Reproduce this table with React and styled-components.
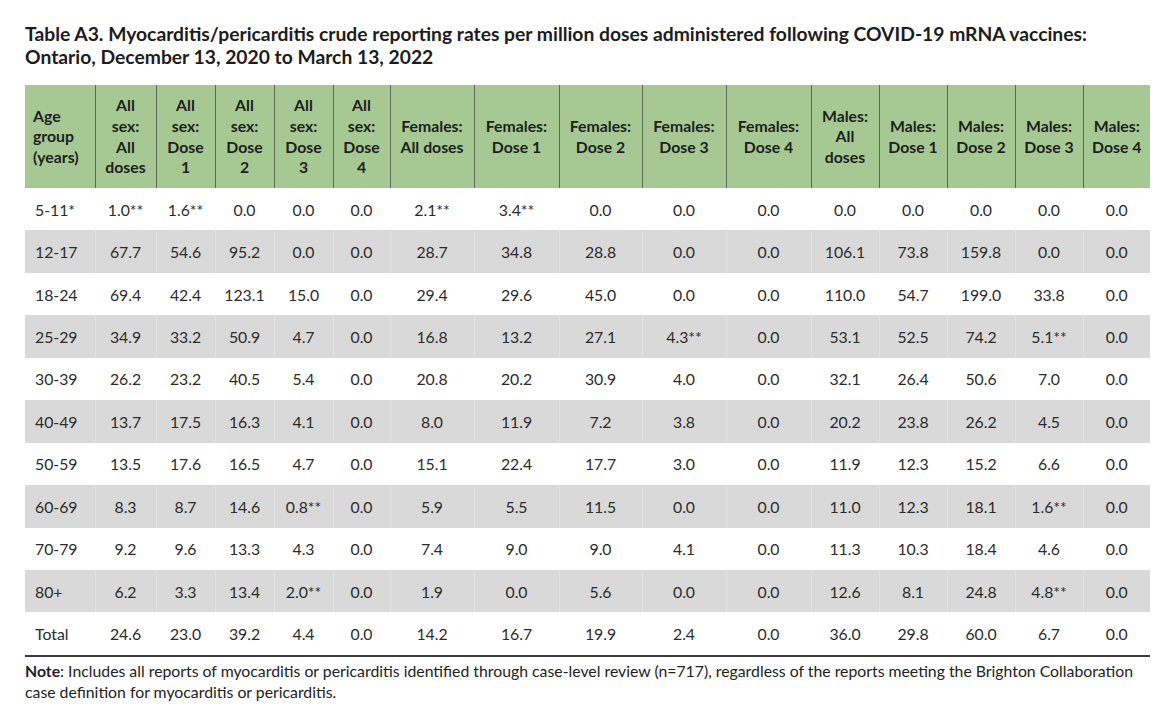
import React from "react";
import styled, { createGlobalStyle } from "styled-components";

const GlobalStyle = createGlobalStyle`
  body {
    margin: 0;
    background: #ffffff;
    font-family: Lato, "Liberation Sans", sans-serif;
    color: #222;
  }
`;

const Page = styled.div`
  width: 1169px;
  height: 705px;
  padding: 23px 0 0 25px;
  box-sizing: border-box;
  overflow: hidden;
`;

const Title = styled.h1`
  margin: 0 0 17px 0;
  font-size: 19.3px;
  font-weight: 700;
  line-height: 22.5px;
  color: #1c1c1c;
  white-space: nowrap;
`;

const Table = styled.table`
  border-collapse: collapse;
  table-layout: fixed;
  width: 1125px;
  border-bottom: 2px solid #3a3a3a;
`;

const HeadCell = styled.th`
  background: #a6c994;
  height: 103px;
  padding: 0 2px;
  font-size: 15.8px;
  font-weight: 700;
  line-height: 20.6px;
  color: #1e1e1e;
  text-align: ${(p) => (p.$left ? "left" : "center")};
  padding-left: ${(p) => (p.$left ? "8px" : "2px")};
  border-left: 1px solid #5c6b55;
  vertical-align: middle;
  &:first-child {
    border-left: none;
  }
`;

const Row = styled.tr`
  background: ${(p) => (p.$shaded ? "#d9d9d9" : "#ffffff")};
`;

const Cell = styled.td`
  height: 42.45px;
  padding: 0;
  font-size: 15.8px;
  color: #2b2b2b;
  text-align: ${(p) => (p.$left ? "left" : "center")};
  padding-left: ${(p) => (p.$left ? "10px" : "0")};
  border-left: 1px solid ${(p) => (p.$shaded ? "#e3e3e3" : "#ffffff")};
  &:first-child {
    border-left: none;
  }
`;

const Note = styled.p`
  margin: 3px 0 0 0;
  width: 1140px;
  font-size: 15.8px;
  line-height: 21px;
  color: #222;
  white-space: nowrap;
`;

const widths = [70, 61, 59, 59, 59, 57, 84, 85, 83, 84, 85, 68, 68, 68, 68, 67];

const headers = [
  ["Age", "group", "(years)"],
  ["All", "sex:", "All", "doses"],
  ["All", "sex:", "Dose", "1"],
  ["All", "sex:", "Dose", "2"],
  ["All", "sex:", "Dose", "3"],
  ["All", "sex:", "Dose", "4"],
  ["Females:", "All doses"],
  ["Females:", "Dose 1"],
  ["Females:", "Dose 2"],
  ["Females:", "Dose 3"],
  ["Females:", "Dose 4"],
  ["Males:", "All", "doses"],
  ["Males:", "Dose 1"],
  ["Males:", "Dose 2"],
  ["Males:", "Dose 3"],
  ["Males:", "Dose 4"],
];

const rows = [
  ["5-11*", "1.0**", "1.6**", "0.0", "0.0", "0.0", "2.1**", "3.4**", "0.0", "0.0", "0.0", "0.0", "0.0", "0.0", "0.0", "0.0"],
  ["12-17", "67.7", "54.6", "95.2", "0.0", "0.0", "28.7", "34.8", "28.8", "0.0", "0.0", "106.1", "73.8", "159.8", "0.0", "0.0"],
  ["18-24", "69.4", "42.4", "123.1", "15.0", "0.0", "29.4", "29.6", "45.0", "0.0", "0.0", "110.0", "54.7", "199.0", "33.8", "0.0"],
  ["25-29", "34.9", "33.2", "50.9", "4.7", "0.0", "16.8", "13.2", "27.1", "4.3**", "0.0", "53.1", "52.5", "74.2", "5.1**", "0.0"],
  ["30-39", "26.2", "23.2", "40.5", "5.4", "0.0", "20.8", "20.2", "30.9", "4.0", "0.0", "32.1", "26.4", "50.6", "7.0", "0.0"],
  ["40-49", "13.7", "17.5", "16.3", "4.1", "0.0", "8.0", "11.9", "7.2", "3.8", "0.0", "20.2", "23.8", "26.2", "4.5", "0.0"],
  ["50-59", "13.5", "17.6", "16.5", "4.7", "0.0", "15.1", "22.4", "17.7", "3.0", "0.0", "11.9", "12.3", "15.2", "6.6", "0.0"],
  ["60-69", "8.3", "8.7", "14.6", "0.8**", "0.0", "5.9", "5.5", "11.5", "0.0", "0.0", "11.0", "12.3", "18.1", "1.6**", "0.0"],
  ["70-79", "9.2", "9.6", "13.3", "4.3", "0.0", "7.4", "9.0", "9.0", "4.1", "0.0", "11.3", "10.3", "18.4", "4.6", "0.0"],
  ["80+", "6.2", "3.3", "13.4", "2.0**", "0.0", "1.9", "0.0", "5.6", "0.0", "0.0", "12.6", "8.1", "24.8", "4.8**", "0.0"],
  ["Total", "24.6", "23.0", "39.2", "4.4", "0.0", "14.2", "16.7", "19.9", "2.4", "0.0", "36.0", "29.8", "60.0", "6.7", "0.0"],
];

export default function App() {
  return (
    <Page>
      <GlobalStyle />
      <Title>
        Table A3. Myocarditis/pericarditis crude reporting rates per million doses administered following COVID-19 mRNA vaccines:
        <br />
        Ontario, December 13, 2020 to March 13, 2022
      </Title>
      <Table>
        <colgroup>
          {widths.map((w, i) => (
            <col key={i} style={{ width: w }} />
          ))}
        </colgroup>
        <thead>
          <tr>
            {headers.map((lines, i) => (
              <HeadCell key={i} $left={i === 0}>
                {lines.map((l, j) => (
                  <React.Fragment key={j}>
                    {j > 0 && <br />}
                    {l}
                  </React.Fragment>
                ))}
              </HeadCell>
            ))}
          </tr>
        </thead>
        <tbody>
          {rows.map((r, i) => (
            <Row key={i} $shaded={i % 2 === 1}>
              {r.map((v, j) => (
                <Cell key={j} $left={j === 0} $shaded={i % 2 === 1}>
                  {v}
                </Cell>
              ))}
            </Row>
          ))}
        </tbody>
      </Table>
      <Note>
        <b>Note</b>: Includes all reports of myocarditis or pericarditis identified through case-level review (n=717), regardless of the reports meeting the Brighton Collaboration
        <br />
        case definition for myocarditis or pericarditis.
      </Note>
    </Page>
  );
}
